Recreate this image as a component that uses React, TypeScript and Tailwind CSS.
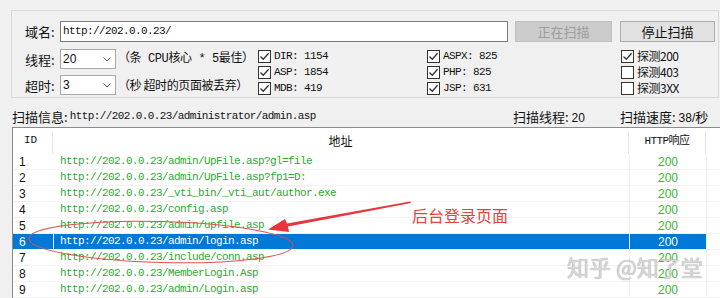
import React from "react";

const cjk = "font-['Noto_Sans_CJK_SC','Noto_Sans',sans-serif]";
const mono = "font-['Liberation_Mono','Noto_Sans_CJK_SC',monospace]";

const rows = [
  "http://202.0.0.23/admin/UpFile.asp?gl=file",
  "http://202.0.0.23/admin/UpFile.asp?fp1=D:",
  "http://202.0.0.23/_vti_bin/_vti_aut/author.exe",
  "http://202.0.0.23/config.asp",
  "http://202.0.0.23/admin/upfile.asp",
  "http://202.0.0.23/admin/login.asp",
  "http://202.0.0.23/include/conn.asp",
  "http://202.0.0.23/MemberLogin.Asp",
  "http://202.0.0.23/admin/Login.asp",
];

function Check({ checked, label, isMono }: { checked: boolean; label: string; isMono?: boolean }) {
  return (
    <div className="flex h-[16px] items-center gap-[3px]">
      <div className="flex h-[13px] w-[13px] items-center justify-center border border-[#333] bg-white">
        {checked && (
          <svg width="11" height="11" viewBox="0 0 11 11">
            <path d="M1.5 5.5 L4.3 8.3 L9.6 2.2" fill="none" stroke="#333" strokeWidth="1.3" />
          </svg>
        )}
      </div>
      <span
        className={
          isMono
            ? "font-['Liberation_Mono',monospace] text-[11px] tracking-[-0.6px] text-[#111]"
            : "font-['Noto_Sans_CJK_SC',sans-serif] text-[12px] tracking-[-0.5px] text-[#111]"
        }
      >
        {label}
      </span>
    </div>
  );
}

function Combo({ value }: { value: string }) {
  return (
    <div className="flex h-[20px] w-[56px] items-center justify-between border border-[#a8a8a8] bg-white pl-[2px] pr-[4px]">
      <span className="font-['Liberation_Sans',sans-serif] text-[12px] text-[#111]">{value}</span>
      <svg width="8" height="5" viewBox="0 0 8 5">
        <path d="M0.5 0.5 L4 4 L7.5 0.5" fill="none" stroke="#555" strokeWidth="1" />
      </svg>
    </div>
  );
}

export default function App() {
  return (
    <div className={`relative h-[298px] w-[720px] overflow-hidden bg-[#f0f0f0] text-[#111] ${cjk}`}>
      <div className="pl-[11px] pt-[10px]">
        <div className="h-[88px] w-[708px] border border-[#d9d9d9] pl-[13px] pt-[10px]">
          <div className="flex h-[21px] items-center">
            <span className="w-[35px] text-[13px] leading-none">域名:</span>
            <div className="flex h-[21px] w-[448px] items-center border border-[#7a7a7a] bg-white pl-[2px]">
              <span className={`${mono} text-[11px] tracking-[-0.6px]`}>http://202.0.0.23/</span>
            </div>
            <div className="ml-[7px] flex h-[21px] w-[97px] items-center justify-center border border-[#bfbfbf] bg-[#cccccc] text-[13px] text-[#9d9d9d]">
              正在扫描
            </div>
            <div className="ml-[8px] flex h-[21px] w-[95px] items-center justify-center border border-[#adadad] bg-[#e1e1e1] text-[13px] text-[#111]">
              停止扫描
            </div>
          </div>
          <div className="mt-[6px] flex">
            <div className="flex w-[233px] flex-col gap-[6px] pt-[1px]">
              <div className="flex h-[20px] items-center">
                <span className="w-[35px] text-[13px] leading-none">线程:</span>
                <Combo value="20" />
                <span className={`ml-[2px] text-[12px] tracking-[-0.4px] ${mono}`}>（条 CPU核心 * 5最佳）</span>
              </div>
              <div className="flex h-[20px] items-center">
                <span className="w-[35px] text-[13px] leading-none">超时:</span>
                <Combo value="3" />
                <span className="ml-[2px] text-[12px] tracking-[-0.4px]">（秒 超时的页面被丢弃）</span>
              </div>
            </div>
            <div className="flex w-[169px] flex-col">
              <Check checked label="DIR: 1154" isMono />
              <Check checked label="ASP: 1854" isMono />
              <Check checked label="MDB: 419" isMono />
            </div>
            <div className="flex w-[194px] flex-col">
              <Check checked label="ASPX: 825" isMono />
              <Check checked label="PHP: 825" isMono />
              <Check checked label="JSP: 631" isMono />
            </div>
            <div className="flex flex-col">
              <Check checked label="探测200" />
              <Check checked={false} label="探测403" />
              <Check checked={false} label="探测3XX" />
            </div>
          </div>
        </div>
      </div>

      <div className="mt-[10px] flex h-[17px] items-center pl-[12px]">
        <div className="flex flex-1 items-center">
          <span className="text-[13px] leading-none">扫描信息:</span>
          <span className={`${mono} ml-[2px] text-[11px] tracking-[-0.6px]`}>http://202.0.0.23/administrator/admin.asp</span>
        </div>
        <span className="w-[107px] text-[13px] leading-none">
          扫描线程: <span className="font-['Liberation_Sans',sans-serif] text-[12px]">20</span>
        </span>
        <span className="w-[100px] text-[13px] leading-none">
          扫描速度: <span className="font-['Liberation_Sans',sans-serif] text-[12px]">38/</span>秒
        </span>
      </div>

      <div className="ml-[12px] mt-[2px] border-l border-t border-[#8a8a8a] bg-white">
        <div className="flex h-[26px] items-start pt-[3px] text-[12px]">
          <div className={`${mono} h-[23px] w-[40px] border-r border-[#e5e5e5] pl-[11px] text-[11px] leading-[18px]`}>ID</div>
          <div className="h-[23px] w-[576px] border-r border-[#e5e5e5] text-center leading-[20px]">地址</div>
          <div className={`${mono} h-[23px] w-[77px] border-r border-[#e5e5e5] text-center text-[11px] leading-[20px] tracking-[-0.6px]`}>
            HTTP响应
          </div>
        </div>
        {rows.map((url, i) => {
          const sel = i === 5;
          return (
            <div key={i} className="flex h-[16px] border-b border-[#f2f2f2]">
              <div
                className={`flex w-[40px] items-center pl-[6px] font-['Liberation_Sans',sans-serif] text-[12px] ${
                  sel ? "bg-[#0078d7] text-white" : "text-[#111]"
                }`}
              >
                {i + 1}
              </div>
              <div
                className={`flex w-[576px] items-center border-l pl-[6px] ${mono} text-[11px] tracking-[-0.6px] ${
                  sel ? "border-white bg-[#0078d7] text-white" : "border-transparent text-[#2eaa2e]"
                }`}
              >
                {url}
              </div>
              <div
                className={`flex w-[77px] items-center justify-center border-l font-['Liberation_Sans',sans-serif] text-[12px] ${
                  sel ? "border-white bg-[#0078d7] text-white" : "border-[#f2f2f2] text-[#3cb43c]"
                }`}
              >
                200
              </div>
              <div className="flex-1 border-l border-[#f2f2f2]" />
            </div>
          );
        })}
      </div>

      <svg className="pointer-events-none absolute left-0 top-0" width="720" height="298" viewBox="0 0 720 298">
        <ellipse cx="161" cy="242" rx="132" ry="20.5" fill="none" stroke="#e0504a" strokeWidth="1" transform="rotate(1.5 161 242)" />
        <polygon points="410,201.5 411,203 288,226.5 289,232 268,229.5 285,219 287,223.5" fill="#e8343a" />
      </svg>

      <div className="absolute left-[412px] top-[204px] text-[16px] leading-[22px] text-[#e8403c]">后台登录页面</div>

      <div className="absolute left-[567px] top-[252px] text-[22px] leading-[28px] text-[#d8d8d8] [text-shadow:0_0_1px_#888]">
        知乎 @知了堂
      </div>
    </div>
  );
}
